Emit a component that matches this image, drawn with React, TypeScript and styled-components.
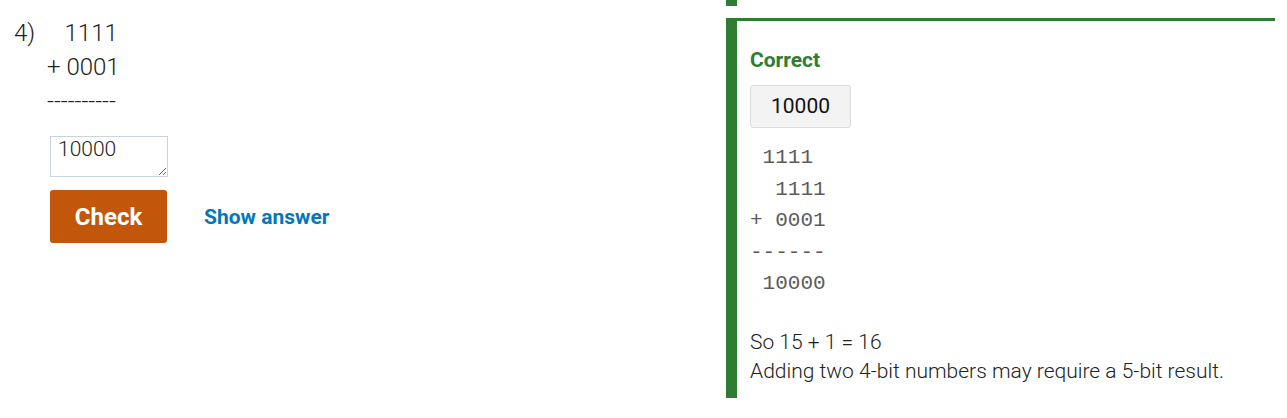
import React from "react";
import styled, { createGlobalStyle } from "styled-components";

const GlobalStyle = createGlobalStyle`
  html, body { margin: 0; padding: 0; background: #ffffff; }
  body { font-family: Roboto, "Noto Sans", sans-serif; color: #222; }
`;

const Page = styled.div`
  display: flex;
  align-items: flex-start;
  width: 1287px;
`;

const QuestionColumn = styled.div`
  flex: 0 0 726px;
  box-sizing: border-box;
  padding: 16px 0 0 14px;
`;

const QuestionRow = styled.div`
  display: flex;
  font-weight: 300;
  font-size: 24px;
  line-height: 34px;
  color: #222;
`;

const Number = styled.div`
  width: 33px;
  flex: 0 0 33px;
`;

const Sum = styled.div`
  white-space: pre;
`;

const AnswerArea = styled.div`
  display: flex;
  flex-direction: column;
  align-items: flex-start;
  padding-left: 36px;
  margin-top: 18px;
`;

const Input = styled.textarea`
  box-sizing: border-box;
  width: 118px;
  height: 41px;
  border: 1px solid #c9d5da;
  border-radius: 0;
  padding: 0 7px;
  font-family: Roboto, sans-serif;
  font-weight: 300;
  font-size: 21px;
  line-height: 24px;
  color: #222;
  resize: both;
  outline: none;
  margin: 0;
`;

const Actions = styled.div`
  display: flex;
  align-items: center;
  margin-top: 13px;
  gap: 37px;
`;

const CheckButton = styled.button`
  width: 117px;
  height: 53px;
  border: none;
  border-radius: 3px;
  background: #c2560b;
  color: #fff;
  font-family: Roboto, sans-serif;
  font-weight: 700;
  font-size: 24px;
  padding: 0;
  cursor: pointer;
`;

const LinkButton = styled.a`
  color: #0277bd;
  font-family: Roboto, sans-serif;
  font-weight: 700;
  font-size: 21px;
  text-decoration: none;
  cursor: pointer;
`;

const FeedbackColumn = styled.div`
  flex: 0 0 549px;
  display: flex;
  flex-direction: column;
  gap: 12px;
`;

const PrevFeedbackTail = styled.div`
  height: 6px;
  border-left: 11px solid #2e7d32;
`;

const Feedback = styled.div`
  box-sizing: border-box;
  border-left: 11px solid #2e7d32;
  border-top: 3px solid #2e7d32;
  padding: 24px 0 15px 13px;
  height: 380px;
`;

const Verdict = styled.div`
  color: #2e7d32;
  font-weight: 700;
  font-size: 21px;
  line-height: 31px;
`;

const AnswerChip = styled.div`
  display: inline-block;
  box-sizing: border-box;
  width: 101px;
  height: 43px;
  margin-top: 9px;
  background: #f3f3f3;
  border: 1px solid #dcdcdc;
  border-radius: 3px;
  font-size: 21px;
  font-weight: 400;
  line-height: 41px;
  text-align: center;
  color: #111;
`;

const Working = styled.pre`
  margin: 14px 0 0 0;
  font-family: "Liberation Mono", "Courier New", monospace;
  font-size: 21px;
  line-height: 31.5px;
  color: #5c5c5c;
`;

const Explanation = styled.div`
  margin-top: 28px;
  font-weight: 300;
  font-size: 21px;
  line-height: 29px;
  color: #222;
`;

export default function App() {
  return (
    <>
      <GlobalStyle />
      <Page>
        <QuestionColumn>
          <QuestionRow>
            <Number>4)</Number>
            <Sum>{"   1111\n+ 0001\n----------"}</Sum>
          </QuestionRow>
          <AnswerArea>
            <Input defaultValue="10000" />
            <Actions>
              <CheckButton>Check</CheckButton>
              <LinkButton>Show answer</LinkButton>
            </Actions>
          </AnswerArea>
        </QuestionColumn>
        <FeedbackColumn>
          <PrevFeedbackTail />
          <Feedback>
            <Verdict>Correct</Verdict>
            <AnswerChip>10000</AnswerChip>
            <Working>{" 1111\n  1111\n+ 0001\n------\n 10000"}</Working>
            <Explanation>
              So 15 + 1 = 16
              <br />
              Adding two 4-bit numbers may require a 5-bit result.
            </Explanation>
          </Feedback>
        </FeedbackColumn>
      </Page>
    </>
  );
}
